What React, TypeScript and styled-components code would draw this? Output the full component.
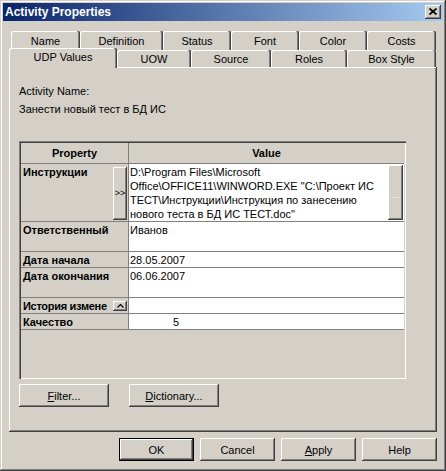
import React from "react";
import styled, { createGlobalStyle, css } from "styled-components";

const FONT = `"Liberation Sans", Arial, sans-serif`;

const GlobalStyle = createGlobalStyle`
  html, body { margin: 0; padding: 0; background: #d4d0c8; }
  body { font-family: ${FONT}; font-size: 11px; color: #000; }
  * { box-sizing: border-box; }
`;

const raised = css`
  box-shadow: inset -1px -1px #404040, inset 1px 1px #ffffff,
    inset -2px -2px #808080, inset 2px 2px #d4d0c8;
`;

const Window = styled.div`
  width: 446px;
  height: 471px;
  padding: 3px;
  background: #d4d0c8;
  box-shadow: inset -1px -1px #404040, inset 1px 1px #d4d0c8,
    inset -2px -2px #808080, inset 2px 2px #ffffff;
  display: flex;
  flex-direction: column;
`;

const TitleBar = styled.div`
  height: 18px;
  flex: none;
  background: linear-gradient(to right, #0a246a, #a6caf0);
  display: flex;
  align-items: center;
  justify-content: space-between;
  padding: 0 2px 0 2px;
`;

const Title = styled.span`
  color: #fff;
  font-weight: bold;
  font-size: 12px;
`;

const CloseButton = styled.div`
  width: 16px;
  height: 14px;
  background: #d4d0c8;
  ${raised}
  display: flex;
  align-items: center;
  justify-content: center;
  padding-bottom: 1px;
`;

const Body = styled.div`
  flex: 1;
  display: flex;
  flex-direction: column;
  padding: 10px 6px 0 6px;
`;

const TabRow = styled.div<{ $indent: number; $h: number }>`
  display: flex;
  align-items: flex-end;
  height: ${(p) => p.$h}px;
  margin-left: ${(p) => p.$indent}px;
  flex: none;
`;

const Tab = styled.div<{ $w: number; $h: number; $active?: boolean }>`
  width: ${(p) => p.$w}px;
  height: ${(p) => p.$h}px;
  flex: none;
  background: #d4d0c8;
  border-radius: 2px 2px 0 0;
  box-shadow: inset -1px 0 #404040, inset -2px 0 #808080, inset 1px 1px #ffffff;
  display: flex;
  align-items: center;
  justify-content: center;
  padding-bottom: ${(p) => (p.$active ? 3 : 0)}px;
  ${(p) =>
    p.$active &&
    css`
      position: relative;
      z-index: 1;
      margin-bottom: -1px;
    `}
`;

const Panel = styled.div`
  height: 365px;
  flex: none;
  display: flex;
  flex-direction: column;
  padding: 18px 0 0 10px;
  box-shadow: inset -1px -1px #404040, inset 1px 1px #ffffff,
    inset -2px -2px #808080;
`;

const Label = styled.div<{ $gap?: number }>`
  line-height: 13px;
  margin-top: ${(p) => p.$gap ?? 0}px;
`;

const Grid = styled.div`
  width: 387px;
  height: 238px;
  margin-top: 25px;
  padding: 2px;
  flex: none;
  background: #d4d0c8;
  box-shadow: inset 1px 1px #808080, inset 2px 2px #404040,
    inset -1px -1px #ffffff, inset -2px -2px #d4d0c8;
`;

const Table = styled.div<{ $rows: string }>`
  display: grid;
  grid-template-columns: 108px 275px;
  grid-template-rows: ${(p) => p.$rows};
`;

const HeadCell = styled.div<{ $first?: boolean }>`
  background: #d4d0c8;
  font-weight: bold;
  display: flex;
  align-items: center;
  justify-content: center;
  border-bottom: 1px solid #808080;
  border-right: ${(p) => (p.$first ? "1px solid #808080" : "0")};
`;

const PropCell = styled.div`
  background: #d4d0c8;
  font-weight: bold;
  line-height: 14px;
  padding: 1px 0 0 2px;
  border-right: 1px solid #808080;
  border-bottom: 1px solid #808080;
  display: flex;
  align-items: flex-start;
  overflow: hidden;
`;

const PropName = styled.span<{ $tight?: boolean }>`
  flex: 1;
  min-width: 0;
  white-space: nowrap;
  letter-spacing: ${(p) => (p.$tight ? "-0.3px" : "0")};
`;

const ValueCell = styled.div<{ $indent?: number }>`
  background: #ffffff;
  line-height: 14px;
  padding: 1px 0 0 ${(p) => 1 + (p.$indent ?? 0)}px;
  border-bottom: 1px solid #808080;
  display: flex;
  align-items: flex-start;
  overflow: hidden;
`;

const ValueText = styled.div`
  flex: 1;
  min-width: 0;
  white-space: pre;
`;

const CellButton = styled.div<{ $w: number; $h: number; $top: number }>`
  width: ${(p) => p.$w}px;
  height: ${(p) => p.$h}px;
  margin: ${(p) => p.$top}px 1px 0 0;
  flex: none;
  background: #d4d0c8;
  box-shadow: inset -1px -1px #404040, inset 1px 1px #ffffff,
    inset -2px -2px #808080;
  display: flex;
  align-items: center;
  justify-content: center;
  font-weight: normal;
  font-size: 9px;
  line-height: 9px;
`;

const Dots = styled.span`
  color: #ffffff;
  font-size: 10px;
  letter-spacing: 0;
  padding-top: 4px;
`;

const PanelButtons = styled.div`
  display: flex;
  gap: 20px;
  margin-top: 5px;
`;

const Button = styled.div<{ $w: number; $default?: boolean }>`
  width: ${(p) => p.$w}px;
  height: 23px;
  flex: none;
  background: #d4d0c8;
  display: flex;
  align-items: center;
  justify-content: center;
  font-size: 11px;
  ${(p) =>
    p.$default
      ? css`
          box-shadow: inset 0 0 0 1px #000000, inset -2px -2px #404040,
            inset 2px 2px #ffffff, inset -3px -3px #808080;
        `
      : raised}
`;

const DialogButtons = styled.div`
  display: flex;
  justify-content: flex-end;
  gap: 6px;
  margin-top: 6px;
`;

const row1 = [
  { label: "Name", w: 69 },
  { label: "Definition", w: 83 },
  { label: "Status", w: 68 },
  { label: "Font", w: 68 },
  { label: "Color", w: 68 },
  { label: "Costs", w: 69 },
];

const row2 = [
  { label: "UDP Values", w: 108, active: true },
  { label: "UOW", w: 74 },
  { label: "Source", w: 80 },
  { label: "Roles", w: 76 },
  { label: "Box Style", w: 89 },
];

const UpCaret = () => (
  <svg width="7" height="4" viewBox="0 0 7 4">
    <polyline points="0.5,3.5 3.5,0.5 6.5,3.5" fill="none" stroke="#000" strokeWidth="1.2" />
  </svg>
);

export default function App() {
  return (
    <>
      <GlobalStyle />
      <Window>
        <TitleBar>
          <Title>Activity Properties</Title>
          <CloseButton>
            <svg width="8" height="7" viewBox="0 0 8 7">
              <path d="M0.5 0.5 L7.5 6.5 M7.5 0.5 L0.5 6.5" stroke="#000" strokeWidth="1.7" />
            </svg>
          </CloseButton>
        </TitleBar>
        <Body>
          <TabRow $indent={2} $h={19}>
            {row1.map((t) => (
              <Tab key={t.label} $w={t.w} $h={19}>
                {t.label}
              </Tab>
            ))}
          </TabRow>
          <TabRow $indent={0} $h={17}>
            {row2.map((t) => (
              <Tab key={t.label} $w={t.w} $h={t.active ? 20 : 17} $active={t.active}>
                {t.label}
              </Tab>
            ))}
          </TabRow>
          <Panel>
            <Label>Activity Name:</Label>
            <Label $gap={5}>Занести новый тест в БД ИС</Label>
            <Grid>
              <Table $rows="21px 58px 30px 16px 30px 16px 16px">
                <HeadCell $first>Property</HeadCell>
                <HeadCell>Value</HeadCell>

                <PropCell>
                  <PropName>Инструкции</PropName>
                  <CellButton $w={14} $h={53} $top={2}>&gt;&gt;</CellButton>
                </PropCell>
                <ValueCell>
                  <ValueText>
                    {"D:\\Program Files\\Microsoft\nOffice\\OFFICE11\\WINWORD.EXE \"C:\\Проект ИС\nТЕСТ\\Инструкции\\Инструкция по занесению\nнового теста в БД ИС ТЕСТ.doc\""}
                  </ValueText>
                  <CellButton $w={15} $h={55} $top={0}>
                    <Dots>...</Dots>
                  </CellButton>
                </ValueCell>

                <PropCell>
                  <PropName>Ответственный</PropName>
                </PropCell>
                <ValueCell>
                  <ValueText>Иванов</ValueText>
                </ValueCell>

                <PropCell>
                  <PropName>Дата начала</PropName>
                </PropCell>
                <ValueCell>
                  <ValueText>28.05.2007</ValueText>
                </ValueCell>

                <PropCell>
                  <PropName>Дата окончания</PropName>
                </PropCell>
                <ValueCell>
                  <ValueText>06.06.2007</ValueText>
                </ValueCell>

                <PropCell>
                  <PropName $tight>История измене</PropName>
                  <CellButton $w={14} $h={10} $top={2}>
                    <UpCaret />
                  </CellButton>
                </PropCell>
                <ValueCell>
                  <ValueText />
                </ValueCell>

                <PropCell>
                  <PropName>Качество</PropName>
                </PropCell>
                <ValueCell $indent={43}>
                  <ValueText>5</ValueText>
                </ValueCell>
              </Table>
            </Grid>
            <PanelButtons>
              <Button $w={90}>
                <span>
                  <u>F</u>ilter...
                </span>
              </Button>
              <Button $w={90}>
                <span>
                  <u>D</u>ictionary...
                </span>
              </Button>
            </PanelButtons>
          </Panel>
          <DialogButtons>
            <Button $w={75} $default>
              OK
            </Button>
            <Button $w={75}>Cancel</Button>
            <Button $w={75}>
              <span>
                <u>A</u>pply
              </span>
            </Button>
            <Button $w={75}>Help</Button>
          </DialogButtons>
        </Body>
      </Window>
    </>
  );
}
